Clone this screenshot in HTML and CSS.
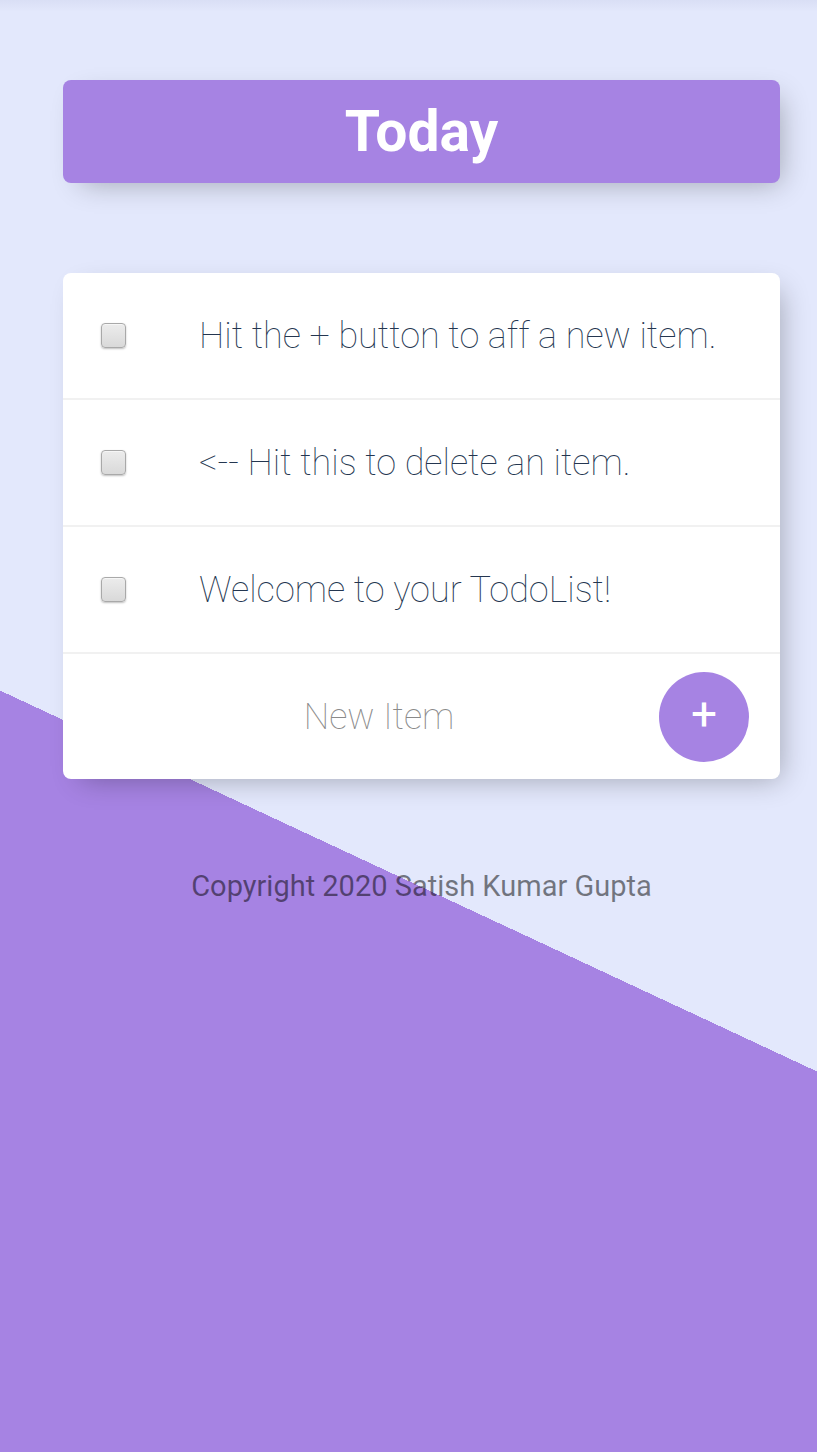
FILE: index.html
```html
<!DOCTYPE html>
<html lang="en">
<head>
<meta charset="utf-8">
<title>Today</title>
<link rel="stylesheet" href="styles.css">
</head>
<body>
  <div class="box heading">
    <h1>Today</h1>
  </div>
  <div class="box list">
    <div class="item">
      <input type="checkbox" class="check">
      <p>Hit the + button to aff a new item.</p>
    </div>
    <div class="item">
      <input type="checkbox" class="check">
      <p>&lt;-- Hit this to delete an item.</p>
    </div>
    <div class="item">
      <input type="checkbox" class="check">
      <p>Welcome to your TodoList!</p>
    </div>
    <form class="item new-item">
      <input type="text" class="new-input" placeholder="New Item" autocomplete="off">
      <button type="button" class="add">+</button>
    </form>
  </div>
  <footer class="footer">Copyright 2020 Satish Kumar Gupta</footer>
</body>
</html>
```
FILE: styles.css
```css
html {
  background-color: #E3E8FC;
  background-image:
    linear-gradient(to bottom, rgba(40, 50, 110, 0.05), rgba(40, 50, 110, 0) 12px),
    linear-gradient(25deg, #A683E3 50%, #E3E8FC 50%);
  background-size: 100% 12px, 100% 1762px;
  background-repeat: no-repeat;
}

body {
  margin: 0 0 0 26px;
  padding: 80px 0 40px;
  font-family: Roboto, "Liberation Sans", sans-serif;
}

.box {
  width: 717px;
  margin: 0 auto;
  background: #fff;
  border-radius: 8px;
  box-shadow: 9px 9px 27px -9px rgba(0, 0, 0, 0.3);
}

.heading {
  background: #A683E3;
  text-align: center;
}

.heading h1 {
  margin: 0;
  padding: 18px 0;
  height: 67px;
  line-height: 67px;
  font-size: 57px;
  font-weight: 700;
  color: #fff;
}

.list {
  margin-top: 90px;
}

.item {
  display: flex;
  align-items: center;
  min-height: 125px;
  border-bottom: 2px solid #F1F1F1;
}

.item:last-child {
  border-bottom: none;
}

.check {
  -webkit-appearance: none;
  appearance: none;
  flex: none;
  width: 25px;
  height: 25px;
  margin: 0 36px 0 38px;
  border: 1px solid #a9a9a9;
  border-radius: 4px;
  background: linear-gradient(#ececec, #d9d9d9);
  box-shadow: 0 1px 2px rgba(0, 0, 0, 0.25), inset 0 1px 0 #f6f6f6;
}

.item p {
  margin: 0;
  padding: 0 0 0 37px;
  font-size: 36px;
  font-weight: 100;
  color: #243650;
}

.new-item {
  padding-left: 36px;
  padding-right: 31px;
  justify-content: space-between;
}

.new-input {
  width: 560px;
  height: 80px;
  padding: 0;
  border: none;
  outline: none;
  background: transparent;
  text-align: center;
  font-family: Roboto, "Liberation Sans", sans-serif;
  font-size: 36px;
  font-weight: 100;
  color: #243650;
}

.new-input::placeholder {
  color: #8a8a8a;
}

.add {
  flex: none;
  width: 90px;
  height: 90px;
  padding: 0 0 6px;
  border: none;
  border-radius: 50%;
  background: #A683E3;
  color: #fff;
  font-family: Roboto, "Liberation Sans", sans-serif;
  font-size: 46px;
  font-weight: 400;
  line-height: 1;
}

.footer {
  margin-top: 90px;
  text-align: center;
  font-size: 29px;
  color: rgba(0, 0, 0, 0.5);
}
```
